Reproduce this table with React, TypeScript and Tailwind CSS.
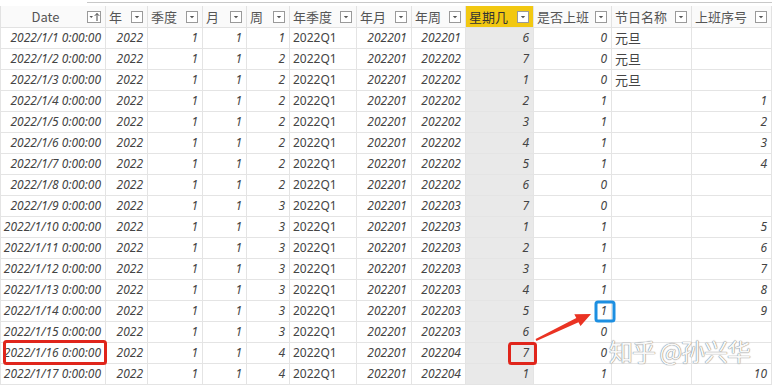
import React from "react";

type Col = { name: string; align: "left" | "right"; italic: boolean; sort?: boolean };

const columns: Col[] = [
  { name: "Date", align: "right", italic: true, sort: true },
  { name: "年", align: "right", italic: true },
  { name: "季度", align: "right", italic: true },
  { name: "月", align: "right", italic: true },
  { name: "周", align: "right", italic: true },
  { name: "年季度", align: "left", italic: false },
  { name: "年月", align: "right", italic: true },
  { name: "年周", align: "right", italic: true },
  { name: "星期几", align: "right", italic: true },
  { name: "是否上班", align: "right", italic: true },
  { name: "节日名称", align: "left", italic: false },
  { name: "上班序号", align: "right", italic: true },
];

// day, 周, 年周, 星期几, 是否上班, 节日名称, 上班序号
const raw: [number, number, string, number, number, string, string][] = [
  [1, 1, "202201", 6, 0, "元旦", ""],
  [2, 2, "202202", 7, 0, "元旦", ""],
  [3, 2, "202202", 1, 0, "元旦", ""],
  [4, 2, "202202", 2, 1, "", "1"],
  [5, 2, "202202", 3, 1, "", "2"],
  [6, 2, "202202", 4, 1, "", "3"],
  [7, 2, "202202", 5, 1, "", "4"],
  [8, 2, "202202", 6, 0, "", ""],
  [9, 3, "202203", 7, 0, "", ""],
  [10, 3, "202203", 1, 1, "", "5"],
  [11, 3, "202203", 2, 1, "", "6"],
  [12, 3, "202203", 3, 1, "", "7"],
  [13, 3, "202203", 4, 1, "", "8"],
  [14, 3, "202203", 5, 1, "", "9"],
  [15, 3, "202203", 6, 0, "", ""],
  [16, 4, "202204", 7, 0, "", ""],
  [17, 4, "202204", 1, 1, "", "10"],
];

const rows = raw.map(([d, wk, yw, dow, work, holiday, seq]) => [
  `2022/1/${d} 0:00:00`,
  "2022",
  "1",
  "1",
  String(wk),
  "2022Q1",
  "202201",
  yw,
  String(dow),
  String(work),
  holiday,
  seq,
]);

const gridCols =
  "grid grid-cols-[106px_42px_55px_44px_43px_67px_55px_54px_68px_78px_80px_80px]";

function DropBox({ sort }: { sort?: boolean }) {
  if (sort) {
    return (
      <svg width="14" height="12" viewBox="0 0 14 12" className="shrink-0">
        <rect x="0.5" y="0.5" width="13" height="11" fill="white" stroke="#9a9a9a" />
        <path d="M2.5 5 L6 5 L4.25 7 Z" fill="#555" />
        <path d="M10 2.5 L10 10 M7.8 4.8 L10 2.5 L12.2 4.8" stroke="#444" strokeWidth="1" fill="none" />
      </svg>
    );
  }
  return (
    <svg width="12" height="12" viewBox="0 0 12 12" className="shrink-0">
      <rect x="0.5" y="0.5" width="11" height="11" fill="white" stroke="#9a9a9a" />
      <path d="M3.8 5 L8.2 5 L6 7.3 Z" fill="#555" />
    </svg>
  );
}

export default function App() {
  return (
    <div className="relative w-[772px] h-[385px] overflow-hidden bg-white font-['Noto_Sans','Noto_Sans_CJK_SC',sans-serif] text-[12px] text-[#444]">
      {/* top strip */}
      <div className="h-[6px] pt-[2px]">
        <div className="ml-[87px] border-t border-[#c8c8c8]" />
      </div>

      {/* header */}
      <div className={`${gridCols} h-[22px] border-b border-[#e2e2e2]`}>
        {columns.map((c, i) => (
          <div
            key={c.name}
            className={`flex items-center border-r border-[#e2e2e2] pl-[3px] pr-[4px] ${
              c.name === "星期几" ? "bg-[#f2c811] text-[#333]" : "bg-[#fafafa] text-[#555]"
            } ${i === 0 ? "border-l" : ""}`}
          >
            <span
              className={`flex-1 font-['Noto_Sans_CJK_SC','Noto_Sans',sans-serif] text-[13px] font-normal leading-none ${
                c.sort ? "text-center" : ""
              }`}
            >
              {c.name}
            </span>
            <DropBox sort={c.sort} />
          </div>
        ))}
      </div>

      {/* body */}
      {rows.map((r, ri) => (
        <div key={ri} className={`${gridCols} h-[21px] border-b border-[#e4e4e4]`}>
          {r.map((v, ci) => {
            const c = columns[ci];
            return (
              <div
                key={ci}
                className={`flex items-center border-r border-[#e4e4e4] px-[4px] whitespace-nowrap ${
                  c.align === "right" ? "justify-end" : "justify-start pl-[3px]"
                } ${c.italic ? "italic" : ""} ${ci === 8 ? "bg-[#e9e9e9]" : ""} ${
                  ci === 0 ? "border-l" : ""
                } ${ci === 10 ? "font-['Noto_Sans_CJK_SC',sans-serif] text-[13px]" : ""}`}
              >
                {v}
              </div>
            );
          })}
        </div>
      ))}

      {/* annotations */}
      <svg
        className="absolute left-0 top-0 pointer-events-none"
        width="772"
        height="385"
        viewBox="0 0 772 385"
      >
        <rect x="4.5" y="341.5" width="101" height="22" rx="2" fill="none" stroke="#e0251b" strokeWidth="3" />
        <rect x="509.5" y="343.5" width="26" height="20" rx="2" fill="none" stroke="#e0251b" strokeWidth="3" />
        <rect x="596" y="302" width="18" height="19" rx="2" fill="none" stroke="#1d8fe1" strokeWidth="3" />
        <polygon
          points="536.4,340.9 578.5,322.3 580.5,326 591,314 574.3,314.2 576.3,317.9 535.6,339.1"
          fill="#ea3323"
        />
      </svg>

      {/* watermark */}
      <div className="absolute left-[609px] top-[339px] font-['Noto_Sans_CJK_SC',sans-serif] text-[24px] leading-none tracking-[-1px] text-[#f8f8f8] [text-shadow:0_0_1px_#7a7a7a,0_0_1px_#7a7a7a] whitespace-nowrap pointer-events-none">
        知乎 @孙兴华
      </div>
    </div>
  );
}
